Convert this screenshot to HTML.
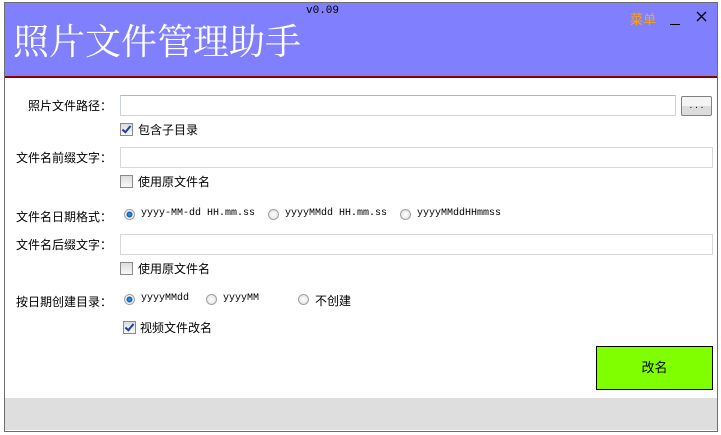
<!DOCTYPE html>
<html><head><meta charset="utf-8"><style>
body{margin:0;width:721px;height:435px;background:#fff;position:relative;overflow:hidden;font-family:"Liberation Sans","Noto Sans CJK SC",sans-serif;font-size:12px;color:#000}
.a{position:absolute}
#win{left:4px;top:2px;width:712px;height:428px;border:1px solid #6e6e6e;background:#fff}
#hdr{left:5px;top:3px;width:712px;height:74px;background:#8080ff}
#line{left:5px;top:76px;width:712px;height:2px;background:#8b0000}
#title{left:13px;top:14px;font-family:"Liberation Serif","Noto Serif CJK SC",serif;font-size:36px;color:#fff;white-space:nowrap}
#ver{left:306px;top:5px;font-family:"Liberation Mono",monospace;font-size:11px}
.lbl{width:104px;text-align:right;left:8px;white-space:nowrap}
.inp{background:#fff;border:1px solid #c8d4e0;border-top-color:#a8b8c8;box-sizing:border-box}
.cb{width:13px;height:13px;border:1px solid #8a8a8a;box-sizing:border-box;background:linear-gradient(#ddd,#f8f8f8)}
.ck::after{content:"";position:absolute;left:3px;top:0px;width:3px;height:7px;border:solid #2040a0;border-width:0 2px 2px 0;transform:rotate(40deg)}
.rd{width:11px;height:11px;border-radius:50%;border:1px solid #a0a0a0;box-sizing:border-box;background:radial-gradient(#fff,#ddd)}
.on{background:radial-gradient(circle,#3aa0ff 0,#0a5aa8 2.5px,#fff 3.5px,#ddd 5px)}
.m{font-family:"Liberation Mono",monospace;font-size:10px;white-space:nowrap}
</style></head><body>
<div class="a" id="win"></div>
<div class="a" id="hdr"></div>
<div class="a" id="line"></div>
<div class="a" id="title">照片文件管理助手</div>
<div class="a" id="ver">v0.09</div>
<div class="a" style="left:630px;top:9px;color:#ffa500;font-size:13px">菜单</div>
<div class="a" style="left:670px;top:24px;width:10px;height:1px;background:#000"></div>
<svg class="a" style="left:696px;top:11px" width="11" height="11"><path d="M1 1L10 10M10 1L1 10" stroke="#000" stroke-width="1.3"/></svg>

<div class="a lbl" style="top:97px">照片文件路径：</div>
<div class="a inp" style="left:120px;top:95px;width:556px;height:21px"></div>
<div class="a" style="left:681px;top:96px;width:31px;height:20px;border:1px solid #808080;border-radius:2px;box-sizing:border-box;background:linear-gradient(#f4f4f4 50%,#dcdcdc 50%);text-align:center;font-size:10px;line-height:18px">. . .</div>
<div class="a cb ck" style="left:120px;top:123px"></div>
<div class="a" style="left:138px;top:121px">包含子目录</div>

<div class="a lbl" style="top:149px">文件名前缀文字：</div>
<div class="a inp" style="left:120px;top:147px;width:593px;height:21px;border-color:#d8d8d8"></div>
<div class="a cb" style="left:120px;top:175px"></div>
<div class="a" style="left:138px;top:173px">使用原文件名</div>

<div class="a lbl" style="top:208px">文件名日期格式：</div>
<div class="a rd on" style="left:124px;top:209px"></div><div class="a m" style="left:141px;top:208px">yyyy-MM-dd HH.mm.ss</div>
<div class="a rd" style="left:268px;top:209px"></div><div class="a m" style="left:285px;top:208px">yyyyMMdd HH.mm.ss</div>
<div class="a rd" style="left:400px;top:209px"></div><div class="a m" style="left:417px;top:208px">yyyyMMddHHmmss</div>

<div class="a lbl" style="top:236px">文件名后缀文字：</div>
<div class="a inp" style="left:120px;top:234px;width:593px;height:21px;border-color:#d8d8d8"></div>
<div class="a cb" style="left:120px;top:262px"></div>
<div class="a" style="left:138px;top:260px">使用原文件名</div>

<div class="a lbl" style="top:293px">按日期创建目录：</div>
<div class="a rd on" style="left:124px;top:294px"></div><div class="a m" style="left:141px;top:293px">yyyyMMdd</div>
<div class="a rd" style="left:206px;top:294px"></div><div class="a m" style="left:223px;top:293px">yyyyMM</div>
<div class="a rd" style="left:298px;top:294px"></div><div class="a" style="left:315px;top:292px">不创建</div>
<div class="a cb ck" style="left:123px;top:321px"></div>
<div class="a" style="left:140px;top:319px">视频文件改名</div>

<div class="a" style="left:596px;top:346px;width:117px;height:44px;background:#80ff00;border:1px solid #000;box-sizing:border-box;text-align:center;line-height:42px;font-size:13px">改名</div>
<div class="a" style="left:5px;top:398px;width:712px;height:32px;background:#dedede"></div>
</body></html>
